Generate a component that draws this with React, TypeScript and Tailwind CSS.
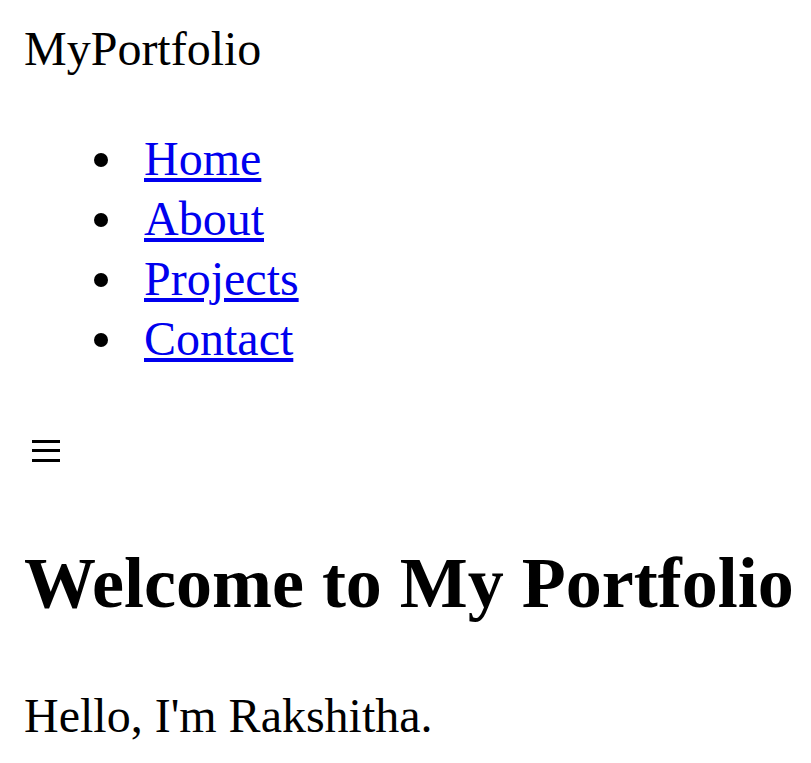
const links = [
  { href: "#home", label: "Home" },
  { href: "#about", label: "About" },
  { href: "#projects", label: "Projects" },
  { href: "#contact", label: "Contact" },
];

export default function App() {
  return (
    <div className="min-h-screen bg-white px-[24px] text-black text-[48px] leading-[60px]" style={{ fontFamily: '"Liberation Serif", "Times New Roman", serif' }}>
      <header>
        <div className="pt-[19px]">MyPortfolio</div>
        <nav>
          <ul className="mt-[50px] list-none pl-[70px]">
            {links.map((l) => (
              <li key={l.href} className="flex items-center">
                <span className="mr-[36px] mt-[2px] inline-block h-[14px] w-[14px] shrink-0 rounded-full bg-black" />
                <a href={l.href} className="text-[#0000EE] underline">{l.label}</a>
              </li>
            ))}
          </ul>
        </nav>
        <div className="mt-[71px] pl-[8px]">
          <svg width="28" height="23" viewBox="0 0 28 23" className="block">
            <rect x="0" y="0" width="28" height="3" fill="#000" />
            <rect x="0" y="9" width="28" height="3" fill="#000" />
            <rect x="0" y="19" width="28" height="3" fill="#000" />
          </svg>
        </div>
      </header>
      <main>
        <h1 className="mt-[75px] text-[72px] leading-[90px] font-bold whitespace-nowrap">Welcome to My Portfolio</h1>
        <p className="mt-[58px]">Hello, I'm Rakshitha.</p>
      </main>
    </div>
  );
}
